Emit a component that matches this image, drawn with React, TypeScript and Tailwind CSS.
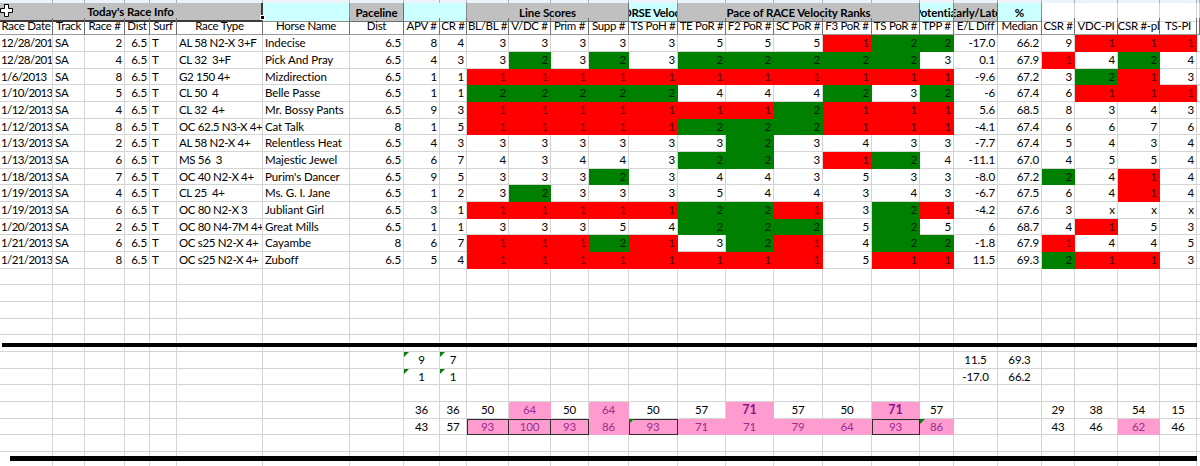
import { twMerge } from 'tailwind-merge'

type Fill = 'red' | 'green' | 'pink'
type Box = 'L' | 'T'
type CellSpec = {
  v?: string | number
  align?: 'l' | 'r' | 'c'
  fill?: Fill
  bold?: boolean
  box?: Box
  tri?: boolean
  cls?: string
}

const GRID =
  'grid grid-cols-[53px_32px_40px_25px_27px_86px_87px_54px_36px_27px_42px_42px_38px_40px_49px_48px_48px_49px_49px_48px_34px_44px_44px_33px_43px_42px_37px_3px]'

const FILL: Record<Fill, string> = {
  red: 'bg-[#ff0000] border-[#ff0000] text-[#5a0000]',
  green: 'bg-[#008000] border-[#008000] text-[#001f00]',
  pink: 'bg-[#ff9ccf] border-[#ff9ccf] text-[#9a2c8e]',
}

const HEADERS = [
  'Race Date', 'Track', 'Race #', 'Dist', 'Surf', 'Race Type', 'Horse Name', 'Dist', 'APV #', 'CR #',
  'BL/BL #', 'V/DC #', 'Prim #', 'Supp #', 'TS PoH #', 'TE PoR #', 'F2 PoR #', 'SC PoR #', 'F3 PoR #',
  'TS PoR #', 'TPP #', 'E/L Diff', 'Median', 'CSR #', 'VDC-PI', 'CSR #-pl', 'TS-PI', '',
]

type Race = [string, string, number, string, string, string, string, string, number, number, number[], string, string, (number | string)[]]

const races: Race[] = [
  ['12/28/201', 'SA', 2, '6.5', 'T', 'AL 58 N2-X 3+F', 'Indecise', '6.5', 8, 4, [3, 3, 3, 3, 3, 5, 5, 5, 1, 2, 2], '-17.0', '66.2', [9, 1, 1, 1]],
  ['12/28/201', 'SA', 4, '6.5', 'T', 'CL 32  3+F', 'Pick And Pray', '6.5', 4, 3, [3, 2, 3, 2, 3, 2, 2, 2, 2, 2, 3], '0.1', '67.9', [1, 4, 2, 4]],
  ['1/6/2013', 'SA', 8, '6.5', 'T', 'G2 150 4+', 'Mizdirection', '6.5', 1, 1, [1, 1, 1, 1, 1, 1, 1, 1, 1, 1, 1], '-9.6', '67.2', [3, 2, 1, 3]],
  ['1/10/2013', 'SA', 5, '6.5', 'T', 'CL 50  4', 'Belle Passe', '6.5', 1, 1, [2, 2, 2, 2, 2, 4, 4, 4, 2, 3, 2], '-6', '67.4', [6, 1, 1, 1]],
  ['1/12/2013', 'SA', 4, '6.5', 'T', 'CL 32  4+', 'Mr. Bossy Pants', '6.5', 9, 3, [1, 1, 1, 1, 1, 1, 1, 2, 1, 1, 1], '5.6', '68.5', [8, 3, 4, 3]],
  ['1/12/2013', 'SA', 8, '6.5', 'T', 'OC 62.5 N3-X 4+', 'Cat Talk', '8', 1, 5, [1, 1, 1, 1, 1, 2, 2, 2, 1, 1, 1], '-4.1', '67.4', [6, 6, 7, 6]],
  ['1/13/2013', 'SA', 2, '6.5', 'T', 'AL 58 N2-X 4+', 'Relentless Heat', '6.5', 4, 3, [3, 3, 3, 3, 3, 3, 2, 3, 4, 3, 3], '-7.7', '67.4', [5, 4, 3, 4]],
  ['1/13/2013', 'SA', 6, '6.5', 'T', 'MS 56  3', 'Majestic Jewel', '6.5', 6, 7, [4, 3, 4, 4, 3, 2, 2, 3, 1, 2, 4], '-11.1', '67.0', [4, 5, 5, 4]],
  ['1/18/2013', 'SA', 7, '6.5', 'T', 'OC 40 N2-X 4+', "Purim's Dancer", '6.5', 9, 5, [3, 3, 3, 2, 3, 4, 4, 3, 5, 3, 3], '-8.0', '67.2', [2, 4, 1, 4]],
  ['1/19/2013', 'SA', 4, '6.5', 'T', 'CL 25  4+', 'Ms. G. I. Jane', '6.5', 1, 2, [3, 2, 3, 3, 3, 5, 4, 4, 3, 4, 3], '-6.7', '67.5', [6, 4, 1, 4]],
  ['1/19/2013', 'SA', 6, '6.5', 'T', 'OC 80 N2-X 3', 'Jubliant Girl', '6.5', 3, 1, [1, 1, 1, 1, 1, 2, 2, 1, 3, 2, 1], '-4.2', '67.6', [3, 'x', 'x', 'x']],
  ['1/20/2013', 'SA', 2, '6.5', 'T', 'OC 80 N4-7M 4+', 'Great Mills', '6.5', 1, 1, [3, 3, 3, 5, 4, 2, 2, 2, 5, 2, 5], '6', '68.7', [4, 1, 5, 3]],
  ['1/21/2013', 'SA', 6, '6.5', 'T', 'OC s25 N2-X 4+', 'Cayambe', '8', 6, 7, [1, 1, 1, 2, 1, 3, 2, 1, 4, 2, 2], '-1.8', '67.9', [1, 4, 4, 5]],
  ['1/21/2013', 'SA', 8, '6.5', 'T', 'OC s25 N2-X 4+', 'Zuboff', '6.5', 5, 4, [1, 1, 1, 1, 1, 1, 1, 1, 5, 1, 1], '11.5', '69.3', [2, 1, 1, 3]],
]

// conditional format: 1 = red, 2 = green
const rank = (v: number | string): CellSpec => ({ v, fill: v === 1 ? 'red' : v === 2 ? 'green' : undefined })

function raceCells(r: Race): CellSpec[] {
  const [date, track, num, dist, surf, type, horse, pDist, apv, cr, ranks, el, med, tail] = r
  return [
    { v: date, align: 'l', cls: 'pl-px tracking-[-0.6px]' }, { v: track, align: 'l' }, { v: num }, { v: dist },
    { v: surf, align: 'l' }, { v: type, align: 'l', cls: 'tracking-[-0.35px]' }, { v: horse, align: 'l' },
    { v: pDist }, { v: apv }, { v: cr },
    ...ranks.map(rank), { v: el }, { v: med }, ...tail.map(rank), {},
  ]
}

// summary rows under the first thick line
const sum = (m: Record<number, CellSpec>): CellSpec[] =>
  Array.from({ length: 28 }, (_, i) => ({ align: 'c' as const, ...(m[i] ?? {}) }))

const P = 'pink' as const
const bottomRows: Record<number, CellSpec[]> = {
  19: sum({ 8: { v: 9, tri: true }, 9: { v: 7, tri: true }, 21: { v: '11.5' }, 22: { v: '69.3' } }),
  20: sum({ 8: { v: 1, tri: true }, 9: { v: 1, tri: true }, 21: { v: '-17.0' }, 22: { v: '66.2' } }),
  22: sum({
    8: { v: 36 }, 9: { v: 36 }, 10: { v: 50 }, 11: { v: 64, fill: P }, 12: { v: 50 }, 13: { v: 64, fill: P },
    14: { v: 50 }, 15: { v: 57 }, 16: { v: 71, fill: P, bold: true }, 17: { v: 57 }, 18: { v: 50 },
    19: { v: 71, fill: P, bold: true }, 20: { v: 57 }, 23: { v: 29 }, 24: { v: 38 }, 25: { v: 54 }, 26: { v: 15 },
  }),
  23: sum({
    8: { v: 43 }, 9: { v: 57 }, 10: { v: 93, fill: P, box: 'L' }, 11: { v: 100, fill: P, box: 'T' },
    12: { v: 93, fill: P, box: 'T' }, 13: { v: 86, fill: P }, 14: { v: 93, fill: P, box: 'L', tri: true },
    15: { v: 71, fill: P }, 16: { v: 71, fill: P }, 17: { v: 79, fill: P }, 18: { v: 64, fill: P },
    19: { v: 93, fill: P, box: 'L' }, 20: { v: 86, fill: P, tri: true }, 23: { v: 43 }, 24: { v: 46 },
    25: { v: 62, fill: P }, 26: { v: 46 },
  }),
}

function Cell({ c }: { c: CellSpec }) {
  const cls = twMerge(
    'relative flex items-center overflow-hidden whitespace-pre border-b border-r border-[#d4d4d4] px-[2px] leading-none text-black',
    c.align === 'l' ? 'justify-start' : c.align === 'c' ? 'justify-center' : 'justify-end',
    c.fill && FILL[c.fill],
    c.bold && 'font-bold text-[12.5px] text-[#86168a]',
    c.box && 'border-[#2e2e2e]',
    c.box === 'L' && 'shadow-[inset_1px_1px_0_0_#2e2e2e]',
    c.box === 'T' && 'shadow-[inset_0_1px_0_0_#2e2e2e]',
    c.cls,
  )
  return (
    <div className={cls}>
      {c.tri && (
        <span className="absolute left-0 top-0 h-0 w-0 border-r-[5px] border-t-[5px] border-r-transparent border-t-[#0a7a0a]" />
      )}
      {c.v}
    </div>
  )
}

const rowH = (i: number) => (i % 3 === 2 ? 'h-[16px]' : 'h-[17px]')

export default function App() {
  const body: CellSpec[][] = Array.from({ length: 26 }, (_, i) =>
    i < races.length ? raceCells(races[i]) : bottomRows[i] ?? sum({}),
  )

  return (
    <div className="relative h-[466px] w-[1200px] overflow-hidden bg-white font-['Lato',sans-serif] text-[11.5px] tracking-[-0.1px] text-black">
      {/* column header strip */}
      <div className={`${GRID} h-[3px]`}>
        {HEADERS.map((_, i) => (
          <div key={i} className="border-r border-[#9fb4cc] bg-[#eef3f9]" />
        ))}
      </div>

      {/* group titles */}
      <div className={`${GRID} h-[15px] font-bold`}>
        <div className="col-span-6 flex items-center justify-center border-b-2 border-r-2 border-[#3a3a3a] bg-[#c0c0c0]">
          Today&apos;s Race Info
        </div>
        <div className="border-b border-r border-[#8c8c8c] bg-[#ccffff]" />
        <div className="flex items-center justify-center border-b border-r border-[#6e6e6e] bg-[#c0c0c0]">Paceline</div>
        <div className="col-span-2 border-b border-r border-[#8c8c8c] bg-[#ccffff]" />
        <div className="col-span-4 flex items-center justify-center border-b border-r border-[#6e6e6e] bg-[#c0c0c0]">
          Line Scores
        </div>
        <div className="flex items-center justify-center overflow-hidden whitespace-nowrap border-b border-r border-[#8c8c8c] bg-[#ccffff] tracking-[-0.3px]">
          HORSE Velocity
        </div>
        <div className="col-span-5 flex items-center justify-center border-b border-r border-[#6e6e6e] bg-[#c0c0c0]">
          Pace of RACE Velocity Ranks
        </div>
        <div className="flex items-center justify-center overflow-hidden whitespace-nowrap border-b border-r border-[#8c8c8c] bg-[#ccffff]">
          Potential
        </div>
        <div className="flex items-center justify-center overflow-hidden whitespace-nowrap border-b border-r border-[#6e6e6e] bg-[#c0c0c0]">
          Early/Late
        </div>
        <div className="flex items-center justify-center border-b border-r border-[#8c8c8c] bg-[#ccffff]">%</div>
        {[0, 1, 2, 3, 4].map((i) => (
          <div key={i} className="border-b border-r border-[#d4d4d4]" />
        ))}
      </div>

      {/* column names */}
      <div className={`${GRID} h-[17px]`}>
        {HEADERS.map((h, i) => (
          <div
            key={i}
            className="flex items-center justify-center overflow-hidden whitespace-nowrap border-b border-r border-b-[#9a9a9a] border-r-[#6f6f6f] leading-none tracking-[-0.3px]"
          >
            {h}
          </div>
        ))}
      </div>

      {body.map((cells, i) => (
        <div key={i} className={`${GRID} ${rowH(i)}`}>
          {cells.map((c, j) => (
            <Cell key={j} c={c} />
          ))}
        </div>
      ))}

      {/* drawn divider lines */}
      <div className="absolute left-[2px] top-[343px] h-[4px] w-[1195px] bg-black" />
      <div className="absolute left-[10px] top-[456px] h-[5px] w-[1187px] bg-black" />

      {/* selection handle + cursor */}
      <div className="absolute left-[260px] top-[15px] h-[5px] w-[5px] border border-white bg-black" />
      <svg className="absolute left-0 top-[4px]" width="13" height="13" viewBox="0 0 13 13">
        <path d="M4.5 0.5h4v4h4v4h-4v4h-4v-4h-4v-4h4z" fill="#fff" stroke="#000" strokeWidth="1" />
      </svg>
    </div>
  )
}
